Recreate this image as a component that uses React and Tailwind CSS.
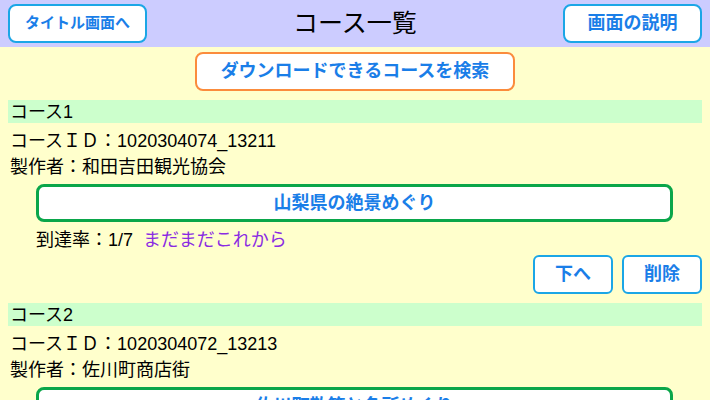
const courses = [
  {
    no: 1,
    id: "1020304074_13211",
    maker: "和田吉田観光協会",
    name: "山梨県の絶景めぐり",
    progress: "1/7",
    comment: "まだまだこれから",
  },
  {
    no: 2,
    id: "1020304072_13213",
    maker: "佐川町商店街",
    name: "佐川町散策と名所めぐり",
    progress: "0/5",
    comment: "まだまだこれから",
  },
];

function SmallButton({ children }) {
  return (
    <button className="w-[80px] h-[39px] bg-white border-2 border-[#1ba6e6] rounded-md text-[18px] font-bold text-[#1a7ee8]">
      {children}
    </button>
  );
}

function CourseItem({ course }) {
  return (
    <div className="flex flex-col">
      <div className="h-[23px] bg-[#ccffcc] flex items-center pl-[2px] pt-[1px] text-[18px] text-black">
        コース{course.no}
      </div>
      <div className="mt-[3px] h-[27px] flex items-center pl-[2px] pt-[3px] text-[18px] text-black">
        コースＩＤ：{course.id}
      </div>
      <div className="h-[27px] flex items-center pl-[2px] pt-[2px] text-[18px] text-black">
        製作者：{course.maker}
      </div>
      <button className="mt-[4px] ml-[28px] mr-[29px] h-[38px] bg-white border-[3px] border-[#0aa64a] rounded-lg text-[18px] font-bold text-[#1a7ee8]">
        {course.name}
      </button>
      <div className="mt-[4px] h-[28px] flex items-center pl-[28px] pt-[1px] text-[18px]">
        <span className="text-black">到達率：{course.progress}</span>
        <span className="ml-[10px] text-[#8a2be2]">{course.comment}</span>
      </div>
      <div className="mt-[1px] h-[39px] flex justify-end gap-[9px]">
        <SmallButton>下へ</SmallButton>
        <SmallButton>削除</SmallButton>
      </div>
    </div>
  );
}

export default function App() {
  return (
    <div
      className="w-[710px] h-[400px] overflow-hidden bg-[#ffffcc]"
      style={{ fontFamily: '"Liberation Sans", "Noto Sans CJK JP", sans-serif' }}
    >
      {/* header */}
      <div className="h-[47px] bg-[#ccccff] flex items-center justify-between px-[8px]">
        <button className="w-[139px] h-[39px] bg-white border-2 border-[#1ba6e6] rounded-lg text-[15px] font-bold text-[#1a7ee8]">
          タイトル画面へ
        </button>
        <h1 className="text-[25px] text-black">コース一覧</h1>
        <button className="w-[139px] h-[39px] bg-white border-2 border-[#1ba6e6] rounded-lg text-[18px] font-bold text-[#1a7ee8]">
          画面の説明
        </button>
      </div>

      <div className="px-[8px] flex flex-col">
        <div className="mt-[5px] flex justify-center">
          <button className="w-[320px] h-[39px] bg-white border-2 border-[#fb8c3c] rounded-lg text-[18px] font-bold text-[#1a7ee8]">
            ダウンロードできるコースを検索
          </button>
        </div>
        <div className="mt-[9px] flex flex-col gap-[9px]">
          {courses.map((c) => (
            <CourseItem key={c.no} course={c} />
          ))}
        </div>
      </div>
    </div>
  );
}
